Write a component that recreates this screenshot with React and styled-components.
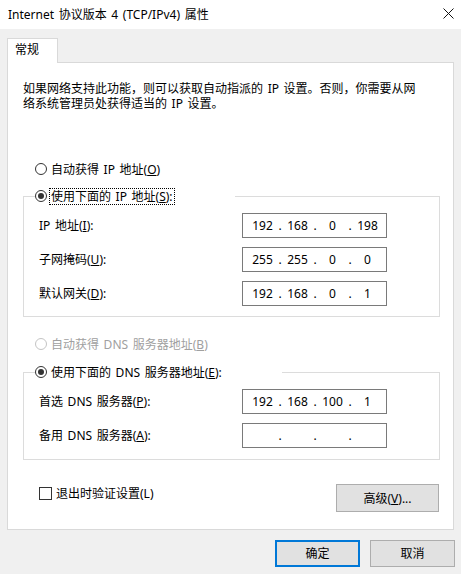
import React from 'react';
import styled, { createGlobalStyle } from 'styled-components';

const Global = createGlobalStyle`
  html, body { margin: 0; padding: 0; background: #f0f0f0; }
  body {
    font-family: "Noto Sans", "Noto Sans CJK SC", sans-serif;
    font-size: 12px;
    color: #000;
    word-spacing: 1.5px;
    text-spacing-trim: space-all;
  }
  * { box-sizing: border-box; }
`;

const Window = styled.div`
  width: 461px;
  height: 574px;
  background: #f0f0f0;
  display: flex;
  flex-direction: column;
  overflow: hidden;
`;

const TitleBar = styled.div`
  height: 29px;
  flex: none;
  background: #fff;
  display: flex;
  align-items: center;
  justify-content: space-between;
  padding-left: 8px;
`;

const Title = styled.span`
  font-size: 12px;
  line-height: 15px;
  margin-top: -1px;
`;

const CloseBox = styled.div`
  width: 26px;
  height: 29px;
  display: flex;
  align-items: center;
  justify-content: center;
  margin-top: -2px;
`;

const Body = styled.div`
  padding: 9px 7px 0 7px;
`;

const TabStrip = styled.div`
  display: flex;
  height: 24px;
`;

const Tab = styled.div`
  position: relative;
  z-index: 1;
  width: 51px;
  height: 25px;
  border: 1px solid #d9d9d9;
  border-bottom: none;
  background: #fff;
  padding: 3px 0 0 7px;
  line-height: 15px;
`;

const Panel = styled.div`
  height: 468px;
  border: 1px solid #d9d9d9;
  background: #fff;
  display: flex;
  flex-direction: column;
`;

const Description = styled.p`
  margin: 18px 0 0 15px;
  line-height: 15px;
`;

const Punct = styled.span`
  display: inline-block;
  width: 12px;
  text-align: left;
`;

const RadioRow = styled.div`
  display: flex;
  align-items: center;
  height: 20px;
  margin-top: ${p => p.$top || 0}px;
  padding-left: ${p => p.$indent || 0}px;
`;

const RadioCircle = styled.span`
  width: 12px;
  height: 12px;
  border-radius: 50%;
  border: 1px solid ${p => (p.$disabled ? '#c4c4c4' : '#333')};
  background: #fff;
  display: flex;
  align-items: center;
  justify-content: center;
  flex: none;
  &::after {
    content: '';
    width: 6px;
    height: 6px;
    border-radius: 50%;
    background: #333;
    display: ${p => (p.$checked ? 'block' : 'none')};
  }
`;

const ControlText = styled.span`
  margin-left: 2px;
  padding: 0 1px;
  line-height: 15px;
  border: 1px ${p => (p.$focused ? 'dotted #000' : 'solid transparent')};
  color: ${p => (p.$disabled ? '#a0a0a0' : '#000')};
  white-space: nowrap;
`;

const Group = styled.fieldset`
  margin: ${p => p.$top}px 13px 0 15px;
  padding: 7px 52px ${p => p.$bottom}px 10px;
  border: 1px solid #dcdcdc;
  min-width: 0;
  display: flex;
  flex-direction: column;
  gap: 9px;
`;

const Legend = styled.legend`
  padding: 0;
  margin-left: 1px;
  width: ${p => p.$width}px;
  height: 20px;
  display: flex;
  align-items: center;
`;

const FieldRow = styled.div`
  display: grid;
  grid-template-columns: 203px 145px;
  align-items: center;
  padding-left: 5px;
`;

const FieldLabel = styled.span`
  line-height: 15px;
  white-space: nowrap;
`;

const IpBox = styled.div`
  width: 145px;
  height: 25px;
  border: 1px solid #7a7a7a;
  background: #fff;
  display: flex;
  align-items: center;
  padding-left: 6px;
  line-height: 15px;
`;

const IpCell = styled.span`
  width: 27px;
  text-align: center;
`;

const IpDot = styled.span`
  width: 8px;
  text-align: center;
`;

const BottomRow = styled.div`
  display: flex;
  justify-content: space-between;
  align-items: flex-start;
  margin-top: 23px;
  padding: 0 14px 0 31px;
`;

const CheckRow = styled.div`
  display: flex;
  align-items: center;
  height: 20px;
`;

const CheckBox = styled.span`
  width: 13px;
  height: 13px;
  border: 1px solid #333;
  background: #fff;
  flex: none;
`;

const Button = styled.button`
  font: inherit;
  word-spacing: inherit;
  color: #000;
  width: ${p => p.$w}px;
  height: ${p => p.$h}px;
  margin-top: ${p => p.$top || 0}px;
  background: #e1e1e1;
  border: ${p => (p.$default ? '2px solid #0078d7' : '1px solid #adadad')};
  padding: 0;
  line-height: 15px;
  display: flex;
  align-items: center;
  justify-content: center;
`;

const Footer = styled.div`
  display: flex;
  justify-content: flex-end;
  gap: 10px;
  margin-top: 10px;
  padding-right: 6px;
`;

const CloseIcon = () => (
  <svg width="11" height="11" viewBox="0 0 11 11">
    <path d="M0.5 0.5 L10.5 10.5 M10.5 0.5 L0.5 10.5" stroke="#111" strokeWidth="1" fill="none" />
  </svg>
);

const Ip = ({ parts }) => (
  <IpBox>
    <IpCell>{parts[0]}</IpCell>
    <IpDot>.</IpDot>
    <IpCell>{parts[1]}</IpCell>
    <IpDot>.</IpDot>
    <IpCell>{parts[2]}</IpCell>
    <IpDot>.</IpDot>
    <IpCell>{parts[3]}</IpCell>
  </IpBox>
);

const Radio = ({ checked, disabled, focused, children }) => (
  <>
    <RadioCircle $checked={checked} $disabled={disabled} />
    <ControlText $focused={focused} $disabled={disabled}>{children}</ControlText>
  </>
);

export default function App() {
  return (
    <>
      <Global />
      <Window>
        <TitleBar>
          <Title>Internet 协议版本 4 (TCP/IPv4) 属性</Title>
          <CloseBox><CloseIcon /></CloseBox>
        </TitleBar>
        <Body>
          <TabStrip>
            <Tab>常规</Tab>
          </TabStrip>
          <Panel>
            <Description>
              如果网络支持此功能<Punct>，</Punct>则可以获取自动指派的 IP 设置<Punct>。</Punct>否则<Punct>，</Punct>你需要从网<br />
              络系统管理员处获得适当的 IP 设置。
            </Description>

            <RadioRow $top={48} $indent={27}>
              <Radio>自动获得 IP 地址(<u>O</u>)</Radio>
            </RadioRow>

            <Group $top={7} $bottom={10}>
              <Legend $width={200}>
                <Radio checked focused>使用下面的 IP 地址(<u>S</u>):</Radio>
              </Legend>
              <FieldRow>
                <FieldLabel>IP 地址(<u>I</u>):</FieldLabel>
                <Ip parts={['192', '168', '0', '198']} />
              </FieldRow>
              <FieldRow>
                <FieldLabel>子网掩码(<u>U</u>):</FieldLabel>
                <Ip parts={['255', '255', '0', '0']} />
              </FieldRow>
              <FieldRow>
                <FieldLabel>默认网关(<u>D</u>):</FieldLabel>
                <Ip parts={['192', '168', '0', '1']} />
              </FieldRow>
            </Group>

            <RadioRow $top={17} $indent={27}>
              <Radio disabled>自动获得 DNS 服务器地址(<u>B</u>)</Radio>
            </RadioRow>

            <Group $top={8} $bottom={11}>
              <Legend $width={247}>
                <Radio checked>使用下面的 DNS 服务器地址(<u>E</u>):</Radio>
              </Legend>
              <FieldRow>
                <FieldLabel>首选 DNS 服务器(<u>P</u>):</FieldLabel>
                <Ip parts={['192', '168', '100', '1']} />
              </FieldRow>
              <FieldRow>
                <FieldLabel>备用 DNS 服务器(<u>A</u>):</FieldLabel>
                <Ip parts={['', '', '', '']} />
              </FieldRow>
            </Group>

            <BottomRow>
              <CheckRow>
                <CheckBox />
                <ControlText>退出时验证设置(L)</ControlText>
              </CheckRow>
              <Button $w={103} $h={28} $top={1}>高级(<u>V</u>)...</Button>
            </BottomRow>
          </Panel>
        </Body>
        <Footer>
          <Button $w={85} $h={27} $default>确定</Button>
          <Button $w={85} $h={27}>取消</Button>
        </Footer>
      </Window>
    </>
  );
}
